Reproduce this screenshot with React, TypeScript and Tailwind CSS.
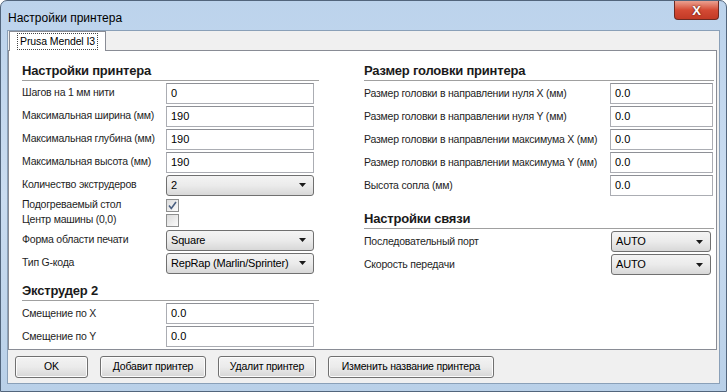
import React from "react";

const font = "font-['Liberation_Sans','Arial',sans-serif]";
const lbl = "shrink-0 whitespace-nowrap text-[10.5px] tracking-[-0.22px] text-[#1e1e1e]";

function Field({ label, value, labelW }: { label: string; value: string; labelW: string }) {
  return (
    <div className="flex items-center h-[21px] mb-[2px]">
      <div className={`${labelW} ${lbl}`}>{label}</div>
      <div className="flex-1 h-[21px] border border-[#abadb3] border-t-[#8e9096] bg-white text-[11px] pl-[4px] flex items-center">
        {value}
      </div>
    </div>
  );
}

function Select({ label, value, labelW, selW }: { label: string; value: string; labelW: string; selW: string }) {
  return (
    <div className="flex items-center h-[21px] mb-[2px]">
      <div className={`${labelW} ${lbl}`}>{label}</div>
      <div
        className={`${selW} h-[21px] rounded-[3px] border border-[#707070] bg-gradient-to-b from-[#f4f4f4] via-[#ebebeb] to-[#d8d8d8] text-[11px] tracking-[-0.2px] pl-[4px] pr-[7px] flex items-center justify-between`}
      >
        <span>{value}</span>
        <svg width="7" height="4" viewBox="0 0 7 4">
          <path d="M0 0h7L3.5 4z" fill="#1a1a1a" />
        </svg>
      </div>
    </div>
  );
}

function Check({ label, checked }: { label: string; checked?: boolean }) {
  return (
    <div className="flex items-center h-[15px]">
      <div className={`w-[144px] ${lbl}`}>{label}</div>
      <div className="w-[13px] h-[13px] border border-[#8e8f8f] bg-gradient-to-br from-[#dcdcdc] to-[#fbfbfb] flex items-center justify-center">
        {checked && (
          <svg width="9" height="9" viewBox="0 0 9 9">
            <path d="M1 4.5l2.3 3L8 1" stroke="#4a5f80" strokeWidth="1.6" fill="none" />
          </svg>
        )}
      </div>
    </div>
  );
}

function Heading({ children }: { children: React.ReactNode }) {
  return (
    <div className="h-[17px] border-b border-[#a0a0a0] text-[13px] tracking-[-0.2px] font-bold text-[#1a1a1a] leading-[14px] mb-[2px] whitespace-nowrap">
      {children}
    </div>
  );
}

function Btn({ children, w }: { children: React.ReactNode; w: string }) {
  return (
    <div
      className={`${w} h-[22px] rounded-[3px] border border-[#707070] bg-gradient-to-b from-[#f3f3f3] via-[#ebebeb] to-[#d6d6d6] text-[10.5px] tracking-[-0.2px] flex items-center justify-center shadow-[inset_0_0_0_1px_#fcfcfc] whitespace-nowrap`}
    >
      {children}
    </div>
  );
}

export default function App() {
  return (
    <div
      className={`${font} w-[727px] h-[392px] rounded-t-[7px] border border-[#52657c] bg-gradient-to-b from-[#bcd3ec] via-[#cadcf0] to-[#b9d0e8] flex flex-col text-black`}
    >
      {/* title bar */}
      <div className="h-[29px] flex items-start justify-between pl-[7px] pr-[7px]">
        <div className="text-[12px] mt-[8px]">Настройки принтера</div>
        <div className="w-[45px] h-[19px] rounded-b-[4px] border border-t-0 border-[#6d2a22] bg-gradient-to-b from-[#eaa090] via-[#d44a34] to-[#c23a26] flex items-center justify-center">
          <span className="text-white font-bold text-[13px] leading-none [text-shadow:0_0_2px_#3a0d08]">X</span>
        </div>
      </div>

      {/* client area */}
      <div className="mx-[6px] h-[354px] bg-[#f0f0f0] border border-[#8aa0b8] flex flex-col">
        {/* tab strip */}
        <div className="h-[19px] flex items-end pl-[1px]">
          <div className="h-[20px] w-[97px] bg-white border border-b-0 border-[#898c95] relative z-10 -mb-[1px] flex items-center justify-center">
            <span className="text-[10.5px] tracking-[-0.1px] px-[2px] border border-dotted border-[#444]">Prusa Mendel I3</span>
          </div>
        </div>

        {/* panel */}
        <div className="h-[300px] bg-white border border-[#898c95] mr-[2px] flex pt-[13px] pl-[13px]">
          {/* left column */}
          <div className="w-[297px] flex flex-col">
            <Heading>Настройки принтера</Heading>
            <div className="pr-[5px]">
              <Field labelW="w-[144px]" label="Шагов на 1 мм нити" value="0" />
              <Field labelW="w-[144px]" label="Максимальная ширина (мм)" value="190" />
              <Field labelW="w-[144px]" label="Максимальная глубина (мм)" value="190" />
              <Field labelW="w-[144px]" label="Максимальная высота (мм)" value="190" />
              <Select labelW="w-[144px]" selW="w-[148px]" label="Количество экструдеров" value="2" />
              <Check label="Подогреваемый стол" checked />
              <Check label="Центр машины (0,0)" />
              <div className="h-[2px]" />
              <Select labelW="w-[144px]" selW="w-[148px]" label="Форма области печати" value="Square" />
              <Select labelW="w-[144px]" selW="w-[148px]" label="Тип G-кода" value="RepRap (Marlin/Sprinter)" />
            </div>
            <div className="h-[9px]" />
            <Heading>Экструдер 2</Heading>
            <div className="pr-[5px]">
              <Field labelW="w-[144px]" label="Смещение по X" value="0.0" />
              <Field labelW="w-[144px]" label="Смещение по Y" value="0.0" />
            </div>
          </div>

          {/* right column */}
          <div className="w-[350px] ml-[45px] flex flex-col">
            <Heading>Размер головки принтера</Heading>
            <div className="pr-[1px]">
              <Field labelW="w-[246px]" label="Размер головки в направлении нуля X (мм)" value="0.0" />
              <Field labelW="w-[246px]" label="Размер головки в направлении нуля Y (мм)" value="0.0" />
              <Field labelW="w-[246px]" label="Размер головки в направлении максимума X (мм)" value="0.0" />
              <Field labelW="w-[246px]" label="Размер головки в направлении максимума Y (мм)" value="0.0" />
              <Field labelW="w-[246px]" label="Высота сопла (мм)" value="0.0" />
            </div>
            <div className="h-[14px]" />
            <Heading>Настройки связи</Heading>
            <Select labelW="w-[247px]" selW="w-[100px]" label="Последовательный порт" value="AUTO" />
            <Select labelW="w-[247px]" selW="w-[100px]" label="Скорость передачи" value="AUTO" />
          </div>
        </div>

        {/* buttons */}
        <div className="flex items-center gap-[12px] pl-[7px] pt-[6px]">
          <Btn w="w-[73px]">OK</Btn>
          <Btn w="w-[106px]">Добавит принтер</Btn>
          <Btn w="w-[98px]">Удалит принтер</Btn>
          <Btn w="w-[166px]">Изменить название принтера</Btn>
        </div>
      </div>
    </div>
  );
}
